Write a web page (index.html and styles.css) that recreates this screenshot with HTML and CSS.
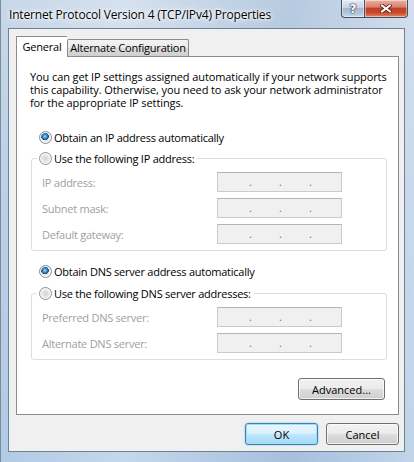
FILE: index.html
```html
<!DOCTYPE html>
<html>
<head>
<meta charset="utf-8">
<title>Internet Protocol Version 4 (TCP/IPv4) Properties</title>
<link rel="stylesheet" href="styles.css">
</head>
<body>
<div class="window">
  <div class="titlebar">
    <span class="title">Internet Protocol Version 4 (TCP/IPv4) Properties</span>
    <div class="caption">
      <div class="cap help"><span class="q">?</span></div>
      <div class="cap close">
        <svg width="12" height="9" viewBox="0 0 12 9">
          <path d="M2 1.5 L10 7.5 M10 1.5 L2 7.5" stroke="#5a1a10" stroke-width="3.6" stroke-linecap="square" fill="none"/>
          <path d="M2 1.5 L10 7.5 M10 1.5 L2 7.5" stroke="#ffffff" stroke-width="2" stroke-linecap="square" fill="none"/>
        </svg>
      </div>
    </div>
  </div>
  <div class="client">
    <div class="tabs">
      <div class="tab active">General</div>
      <div class="tab alt">Alternate Configuration</div>
    </div>
    <div class="panel">
      <p class="intro">You can get IP settings assigned automatically if your network supports<br>this capability. Otherwise, you need to ask your network administrator<br>for the appropriate IP settings.</p>
      <div class="radio-row top"><span class="radio on"></span><span>Obtain an IP address automatically</span></div>
      <div class="group">
        <div class="radio-row legend"><span class="radio"></span><span>Use the following IP address:</span></div>
        <div class="field first"><span class="flabel">IP address:</span><span class="ipbox"><span>.</span><span>.</span><span>.</span></span></div>
        <div class="field"><span class="flabel">Subnet mask:</span><span class="ipbox"><span>.</span><span>.</span><span>.</span></span></div>
        <div class="field"><span class="flabel">Default gateway:</span><span class="ipbox"><span>.</span><span>.</span><span>.</span></span></div>
      </div>
      <div class="radio-row mid"><span class="radio on"></span><span>Obtain DNS server address automatically</span></div>
      <div class="group dns">
        <div class="radio-row legend"><span class="radio"></span><span>Use the following DNS server addresses:</span></div>
        <div class="field first"><span class="flabel">Preferred DNS server:</span><span class="ipbox"><span>.</span><span>.</span><span>.</span></span></div>
        <div class="field"><span class="flabel">Alternate DNS server:</span><span class="ipbox"><span>.</span><span>.</span><span>.</span></span></div>
      </div>
      <div class="adv-row"><div class="btn adv">Advanced...</div></div>
    </div>
    <div class="footer">
      <div class="btn ok">OK</div>
      <div class="btn">Cancel</div>
    </div>
  </div>
</div>
</body>
</html>
```

FILE: styles.css
```css
* { box-sizing: border-box; }
html, body { margin: 0; padding: 0; }
body {
  width: 414px;
  height: 462px;
  overflow: hidden;
  font-family: "Open Sans", "Noto Sans", sans-serif;
  font-size: 11px;
  color: #000;
  background: #b7cce3;
}

.window {
  width: 414px;
  height: 462px;
  display: flex;
  flex-direction: column;
  border-left: 1px solid #7c8a99;
  background:
    linear-gradient(to right, rgba(255,255,255,0.0) 0, rgba(255,255,255,0.25) 30%, rgba(120,150,185,0.2) 70%, rgba(255,255,255,0.2) 100%),
    linear-gradient(to bottom, #c7d7e9 0, #bcd0e6 40%, #b1cae5 100%);
}

.titlebar {
  height: 28px;
  flex: none;
  display: flex;
  justify-content: space-between;
  align-items: flex-start;
  padding: 0 6px 0 8px;
}
.title {
  margin-top: 6px;
  font-size: 12px;
  letter-spacing: -0.18px;
  line-height: 17px;
  color: #000;
  text-shadow: 0 0 8px #fff, 0 0 4px #fff, 0 0 2px #fff;
}
.caption { display: flex; }
.cap {
  height: 18px;
  border: 1px solid #3f4f66;
  border-top: none;
  display: flex;
  align-items: center;
  justify-content: center;
  box-shadow: inset 0 0 0 1px rgba(255,255,255,0.45);
}
.cap.help {
  width: 23px;
  border-right: none;
  border-radius: 0 0 0 4px;
  background: linear-gradient(#e3ebf4 0, #c6d4e4 45%, #a5b8cf 50%, #b4c7dc 80%, #cbdbea 100%);
}
.cap.help .q {
  font-family: "DejaVu Sans", sans-serif;
  font-weight: bold;
  font-size: 12px;
  line-height: 14px;
  color: #fff;
  text-shadow: 0 0 1px #27364a, 0 0 1px #27364a, 0 0 2px #27364a;
}
.cap.close {
  width: 44px;
  border-radius: 0 0 4px 0;
  background: linear-gradient(#eab2a4 0, #d8826c 40%, #c3412a 50%, #c9482c 75%, #e08a5d 100%);
}

.client {
  flex: 1;
  margin: 0 9px 10px 7px;
  border: 1px solid #6f8196;
  background: #f0f0f0;
  display: flex;
  flex-direction: column;
  padding: 7px 5px 6px 7px;
}

.tabs {
  display: flex;
  align-items: flex-end;
  height: 20px;
  flex: none;
}
.tab {
  height: 17px;
  border: 1px solid #898c95;
  border-bottom: none;
  background: linear-gradient(#f3f3f3 0, #ebebeb 50%, #dddddd 50%, #cfcfcf 100%);
  line-height: 15px;
  text-align: center;
  white-space: nowrap;
  letter-spacing: -0.2px;
}
.tab.active {
  width: 51px;
  height: 21px;
  margin-bottom: -1px;
  border-right: none;
  background: #fff;
  line-height: 19px;
  position: relative;
  z-index: 1;
}
.tab.alt {
  width: 122px;
  border-radius: 2px 2px 0 0;
}

.panel {
  flex: 1;
  border: 1px solid #898c95;
  background: #fff;
  padding: 13px 11px 0 13px;
  display: flex;
  flex-direction: column;
}
.intro {
  margin: 0;
  line-height: 13px;
  white-space: nowrap;
  letter-spacing: -0.1px;
}

.radio-row {
  display: flex;
  align-items: center;
  height: 16px;
  gap: 2px;
  white-space: nowrap;
  letter-spacing: -0.25px;
}
.radio-row.top { margin: 20px 0 0 9px; }
.radio-row.mid { margin: 12px 0 0 9px; }

.radio {
  width: 13px;
  height: 13px;
  border-radius: 50%;
  border: 1px solid #929292;
  background: radial-gradient(circle at 50% 50%, #d3d3d3 0, #e4e4e4 3px, #f4f4f4 5px, #fbfbfb 6px);
  box-shadow: inset 0 0 0 1px #f6f6f6;
  flex: none;
}
.radio.on {
  border-color: #8b8b8b;
  background:
    radial-gradient(circle at 45% 40%, #bfe6fa 0, #5aa7d8 1.3px, #2a6aa6 2.8px, #184d7e 3.6px, rgba(0,0,0,0) 4.1px),
    radial-gradient(circle at 50% 50%, #d3d3d3 0, #e4e4e4 3px, #f4f4f4 5px, #fbfbfb 6px);
}

.group {
  margin: 13px 0 0 1px;
  border: 1px solid #d5dfe5;
  border-radius: 3px;
  padding: 0 0 6px 10px;
}
.group.dns { margin-top: 14px; padding-bottom: 6px; }
.radio-row.legend {
  margin: -9px 0 0 -5px;
  padding: 0 3px 0 2px;
  width: fit-content;
  background: #fff;
}

.field {
  display: flex;
  align-items: center;
  height: 20px;
  margin-top: 6px;
}
.flabel {
  width: 175px;
  color: #a0a0a0;
  white-space: nowrap;
  letter-spacing: -0.25px;
}
.ipbox {
  width: 125px;
  height: 20px;
  border: 1px solid #cbcbcb;
  border-top-color: #b5b5b5;
  background: #f0f0f0;
  display: flex;
  padding-left: 31px;
  line-height: 18px;
  color: #707070;
}
.ipbox span { width: 30px; }

.adv-row {
  display: flex;
  justify-content: flex-end;
  margin: 18px 2px 0 0;
}

.btn {
  height: 22px;
  border: 1px solid #707070;
  border-radius: 3px;
  background: linear-gradient(#f2f2f2 0, #ebebeb 50%, #dddddd 50%, #cfcfcf 100%);
  box-shadow: inset 0 0 0 1px rgba(255,255,255,0.7);
  display: flex;
  align-items: center;
  justify-content: center;
  width: 73px;
  white-space: nowrap;
}
.btn.adv { width: 87px; }
.btn.ok {
  border-color: #3c7fb1;
  background: linear-gradient(#eaf6fd 0, #d9f0fc 50%, #bee6fd 50%, #a7d9f5 100%);
  box-shadow: inset 0 0 0 1px #9ee0f8, 0 0 2px #7fc4ea;
}

.footer {
  flex: none;
  display: flex;
  justify-content: flex-end;
  gap: 8px;
  margin-top: 8px;
}
```
